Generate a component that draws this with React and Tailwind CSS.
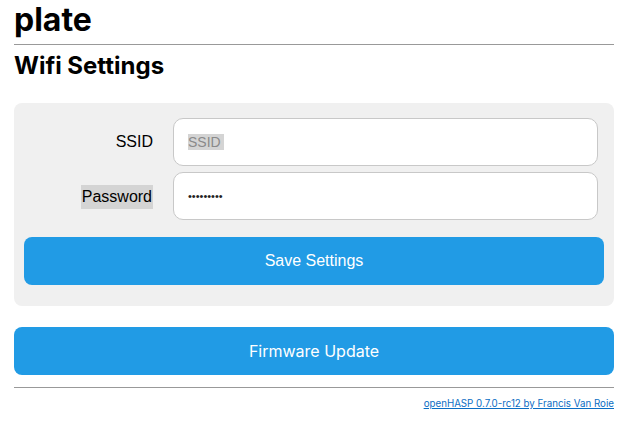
import React from 'react';

const App = () => {
  return (
    <div className="min-h-screen bg-white font-['Inter',sans-serif] text-black">
      <div className="px-[14px] w-[628px]">
        <h1 className="text-[32px] font-bold leading-[38px] pt-[1px] pb-[5px] border-b border-[#999]">plate</h1>
        <h2 className="text-[24px] font-bold leading-[30px] mt-[6px]">Wifi Settings</h2>

        <div className="mt-[22px] bg-[#f0f0f0] rounded-[8px] px-[10px] pt-[15px] pb-[21px]">
          <div className="flex items-center">
            <label className="w-[129px] text-right text-[16px] font-['Liberation_Sans',sans-serif]">SSID</label>
            <div className="ml-[20px] mr-[6px] flex-1 h-[48px] bg-white border border-[#c8c8c8] rounded-[10px] flex items-center px-[14px]">
              <span className="text-[14px] text-[#8a8a8a] bg-[#d4d4d4] font-['Liberation_Sans',sans-serif] leading-[16px] pr-[3px]">SSID</span>
            </div>
          </div>
          <div className="flex items-center mt-[6px]">
            <div className="w-[129px] flex justify-end pt-[2px]">
              <label className="text-[16px] bg-[#d4d4d4] px-[1px] leading-[24px] font-['Liberation_Sans',sans-serif]">Password</label>
            </div>
            <div className="ml-[20px] mr-[6px] flex-1 h-[48px] bg-white border border-[#c8c8c8] rounded-[10px] flex items-center px-[14px]">
              <span className="text-[11px] text-[#222] font-['Liberation_Sans',sans-serif]">•••••••••</span>
            </div>
          </div>
          <button className="mt-[17px] w-full h-[48px] bg-[#219be5] rounded-[8px] text-white text-[16px] font-['Liberation_Sans',sans-serif]">
            Save Settings
          </button>
        </div>

        <button className="mt-[21px] w-full h-[48px] bg-[#219be5] rounded-[8px] text-white text-[16px]">
          Firmware Update
        </button>

        <div className="mt-[12px] border-t border-[#999] text-right pt-[1px]">
          <a href="#" className="text-[9.75px] text-[#0b6ec4] underline">openHASP 0.7.0-rc12 by Francis Van Roie</a>
        </div>
      </div>
    </div>
  );
};

export default App;
